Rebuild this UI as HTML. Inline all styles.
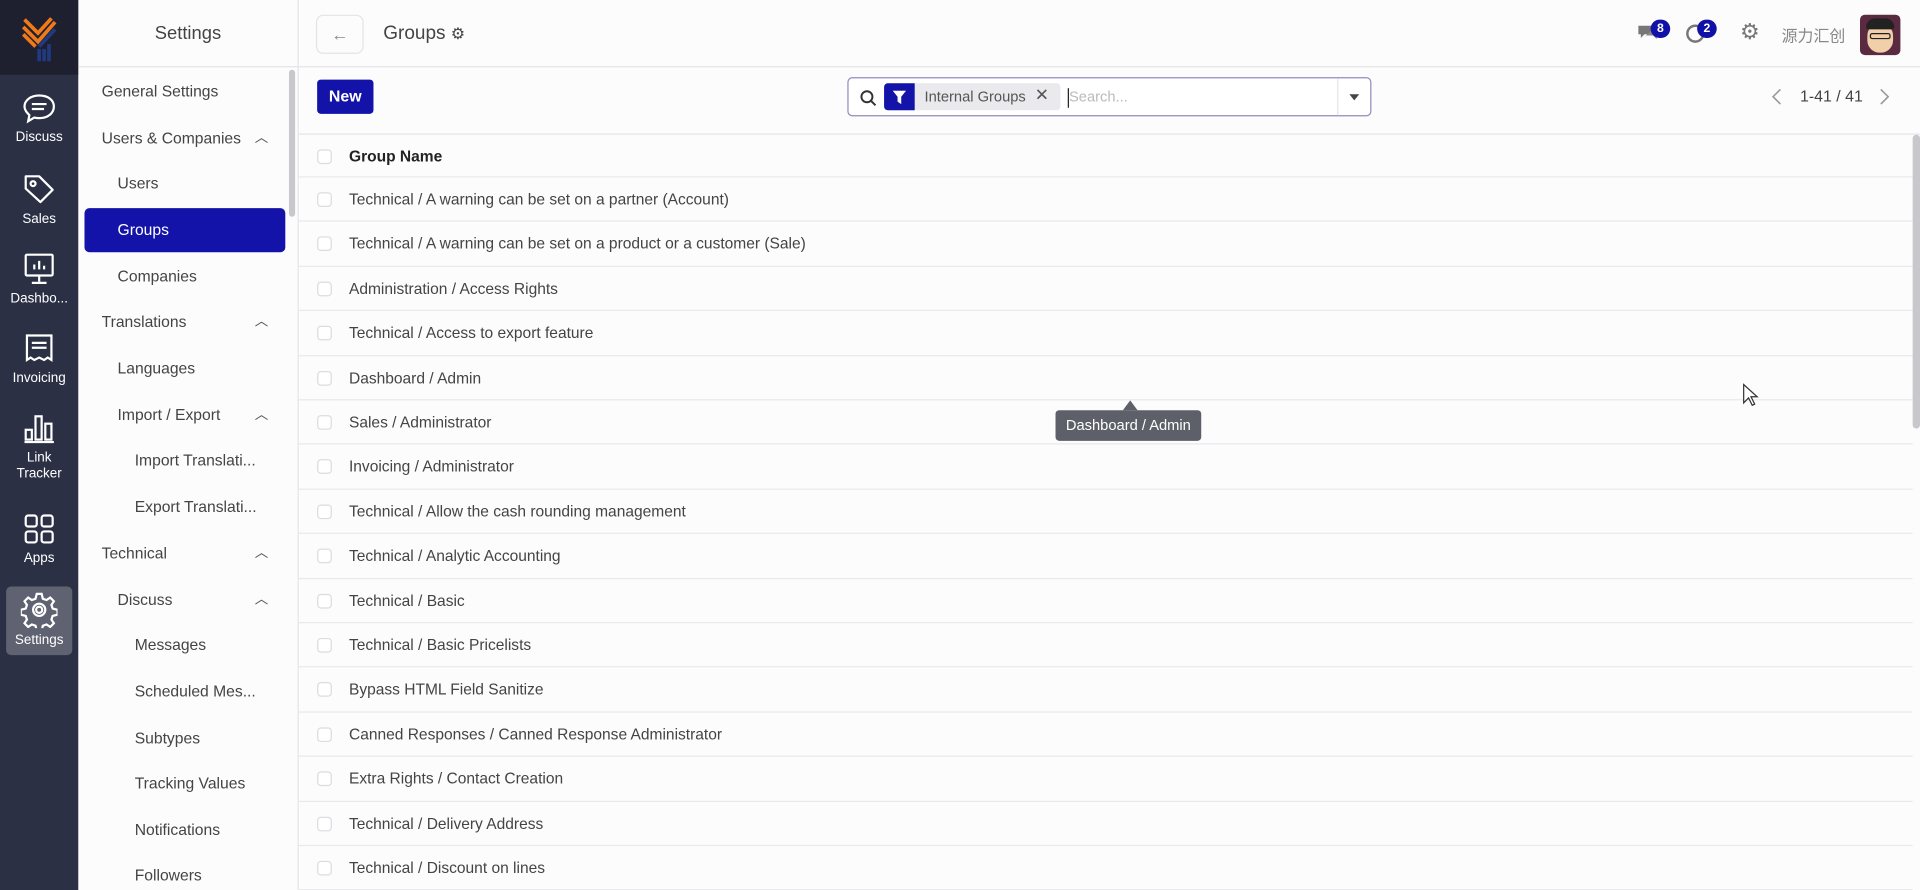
<!DOCTYPE html>
<html><head><meta charset="utf-8">
<style>
*{box-sizing:border-box;margin:0;padding:0}
html,body{width:1920px;height:890px;overflow:hidden;background:#fcfcfd}
#w{width:1568px;height:727px;transform:scale(1.22449);transform-origin:0 0;position:relative;font-family:"Liberation Sans","Noto Sans CJK SC",sans-serif;color:#444;font-size:13px}
.abs{position:absolute}
#nav{left:0;top:0;width:64px;height:727px;background:#2b3044}
#logo{left:0;top:0;width:64px;height:61px;background:#1e2030}
.ni{position:absolute;left:0;width:64px;text-align:center;color:#fff;font-size:11px;line-height:13px}
.ni svg{display:block;margin:0 auto 4px}
#side{left:64px;top:0;width:180px;height:727px;background:#fcfcfd;border-right:1px solid #e4e4e8}
.si{position:absolute;left:0;width:170px;font-size:12.8px;color:#444;height:20px;line-height:20px}
.car{position:absolute;right:14px;top:0;font-size:11px;color:#555}
#main{left:244px;top:0;width:1324px;height:727px}
.row{position:absolute;left:0;width:1318px;height:36.4px;border-bottom:1px solid #e9e9ed;line-height:36px;padding-left:41px;font-size:12.7px;color:#444}
.cb{position:absolute;left:15px;top:12px;width:12px;height:12px;border:1px solid #dcdce0;border-radius:3px;background:#fff}
</style></head><body><div id="w">
<div id="nav" class="abs"></div>
<div id="logo" class="abs">
<svg width="64" height="61" viewBox="0 0 64 61"><g stroke="#f07a1a" stroke-width="3" fill="none"><path d="M19 22l12 12 14-16"/><path d="M19 28l10 10"/><path d="M20 16l11 11 11-12"/></g><g stroke="#1f3a80" stroke-width="3"><path d="M32 38l13-14"/><path d="M32 40v10M36 40v10M40 36v14"/></g></svg></div>
<div class="ni" style="top:76px"><svg width="28" height="26" viewBox="0 0 28 26" fill="none" stroke="#fff" stroke-width="1.8"><path d="M14 2C7 2 2 6 2 11c0 3 2 5 4 7l-1 5 5-3c1 .3 2.5.5 4 .5 7 0 12-4 12-9.5S21 2 14 2z"/><path d="M8 9h12M8 13h10"/></svg>Discuss</div>
<div class="ni" style="top:141px"><svg width="28" height="28" viewBox="0 0 28 28" fill="none" stroke="#fff" stroke-width="1.8"><path d="M3 3h11l11 11-10 10L3 13z" stroke-linejoin="round"/><circle cx="9" cy="9" r="2"/></svg>Sales</div>
<div class="ni" style="top:206px"><svg width="28" height="28" viewBox="0 0 28 28" fill="none" stroke="#fff" stroke-width="1.8"><rect x="3" y="2" width="22" height="17" rx="1"/><path d="M14 19v5M8 25h12M10 14v-4M14 14V7M18 14v-3"/></svg>Dashbo...</div>
<div class="ni" style="top:271px"><svg width="28" height="28" viewBox="0 0 28 28" fill="none" stroke="#fff" stroke-width="1.8"><path d="M4 3h20v20l-3-2-3 2-4-2-4 2-3-2-3 2z"/><path d="M8 9h12M8 13h12"/></svg>Invoicing</div>
<div class="ni" style="top:336px"><svg width="28" height="28" viewBox="0 0 28 28" fill="none" stroke="#fff" stroke-width="1.8"><rect x="3" y="15" width="5" height="8"/><rect x="11" y="4" width="5" height="19"/><rect x="19" y="10" width="5" height="13"/><path d="M2 25h24"/></svg>Link<br>Tracker</div>
<div class="ni" style="top:418px"><svg width="28" height="28" viewBox="0 0 28 28" fill="none" stroke="#fff" stroke-width="1.8"><rect x="3" y="3" width="9" height="9" rx="2"/><rect x="16" y="3" width="9" height="9" rx="2"/><rect x="3" y="16" width="9" height="9" rx="2"/><rect x="16" y="16" width="9" height="9" rx="2"/></svg>Apps</div>
<div class="abs" style="left:5px;top:479px;width:54px;height:56px;background:#5f6270;border-radius:4px"></div>
<div class="ni" style="top:483px"><svg width="30" height="30" viewBox="0 0 30 30" fill="none" stroke="#fff" stroke-width="1.8"><path d="M13 2h4l1 4 3 1 3-2 3 3-2 3 1 3 4 1v4l-4 1-1 3 2 3-3 3-3-2-3 1-1 4h-4l-1-4-3-1-3 2-3-3 2-3-1-3-4-1v-4l4-1 1-3-2-3 3-3 3 2 3-1z"/><circle cx="15" cy="15" r="5"/><circle cx="15" cy="15" r="2.5"/></svg>Settings</div>

<div id="side" class="abs">
<div style="position:absolute;top:0;left:0;width:179px;height:55px;border-bottom:1px solid #e4e4e8;text-align:center;line-height:56px;font-size:15px;color:#444">Settings</div>
<div style="position:absolute;right:2px;top:57px;width:5px;height:120px;background:#c8c8cc;border-radius:3px"></div>
<div class="abs" style="left:5px;top:170px;width:164px;height:36px;background:#1313a9;border-radius:4px"></div>
<div class="si" style="top:65px;left:19px">General Settings</div>
<div class="si" style="top:103px;left:19px;width:150px">Users &amp; Companies<span class="car">︿</span></div>
<div class="si" style="top:140px;left:32px">Users</div>
<div class="si" style="top:178px;left:32px;color:#fff">Groups</div>
<div class="si" style="top:216px;left:32px">Companies</div>
<div class="si" style="top:253px;left:19px;width:150px">Translations<span class="car">︿</span></div>
<div class="si" style="top:291px;left:32px">Languages</div>
<div class="si" style="top:329px;left:32px;width:137px">Import / Export<span class="car">︿</span></div>
<div class="si" style="top:366px;left:46px">Import Translati...</div>
<div class="si" style="top:404px;left:46px">Export Translati...</div>
<div class="si" style="top:442px;left:19px;width:150px">Technical<span class="car">︿</span></div>
<div class="si" style="top:480px;left:32px;width:137px">Discuss<span class="car">︿</span></div>
<div class="si" style="top:517px;left:46px">Messages</div>
<div class="si" style="top:555px;left:46px">Scheduled Mes...</div>
<div class="si" style="top:593px;left:46px">Subtypes</div>
<div class="si" style="top:630px;left:46px">Tracking Values</div>
<div class="si" style="top:668px;left:46px">Notifications</div>
<div class="si" style="top:705px;left:46px">Followers</div>
</div>

<div id="main" class="abs">
<div class="abs" style="left:0;top:0;width:1324px;height:55px;border-bottom:1px solid #e4e4e8"></div>
<div class="abs" style="left:14px;top:12px;width:39px;height:32px;border:1px solid #e4e4e8;border-radius:6px;text-align:center;line-height:30px;color:#888;font-size:14px">←</div>
<div class="abs" style="left:69px;top:19px;font-size:15.5px;color:#444">Groups <span style="font-size:13px">⚙</span></div>
<div class="abs" style="left:1092px;top:17px"><svg width="20" height="18" viewBox="0 0 20 18"><path d="M2 4h11v7H7l-3 3v-3H2z" fill="#777"/><path d="M8 12h6l3 3v-3h1V6h-3" fill="#888"/></svg></div>
<div class="abs" style="left:1104px;top:16px;width:16px;height:15px;border-radius:8px;background:#1111a8;color:#fff;font-size:10px;font-weight:bold;text-align:center;line-height:15px">8</div>
<div class="abs" style="left:1133px;top:20px;width:15px;height:15px;border:2px solid #777;border-radius:50%"></div>
<div class="abs" style="left:1142px;top:16px;width:16px;height:15px;border-radius:8px;background:#1111a8;color:#fff;font-size:10px;font-weight:bold;text-align:center;line-height:15px">2</div>
<div class="abs" style="left:1177px;top:16px;font-size:18px;color:#777">⚙</div>
<div class="abs" style="left:1211px;top:19px;font-size:13px;color:#888">源力汇创</div>
<div class="abs" style="left:1275px;top:12px;width:33px;height:33px;border-radius:4px;background:#5a2a40;overflow:hidden"><div style="position:absolute;left:6px;top:7px;width:21px;height:24px;border-radius:10px;background:#f1cfa8"></div><div style="position:absolute;left:5px;top:3px;width:23px;height:9px;border-radius:8px 8px 2px 2px;background:#222"></div><div style="position:absolute;left:8px;top:15px;width:17px;height:5px;border:1.5px solid #222;border-radius:2px"></div></div>

<div class="abs" style="left:15px;top:65px;width:46px;height:28px;background:#1313a9;border-radius:3px;color:#fff;font-weight:bold;text-align:center;line-height:28px;font-size:13px">New</div>
<div class="abs" style="left:448px;top:63px;width:428px;height:32px;border:1px solid #8f8dbd;border-radius:4px;background:#fff">
<svg class="abs" style="left:9px;top:9px" width="14" height="14" viewBox="0 0 14 14" fill="none" stroke="#333" stroke-width="1.6"><circle cx="6" cy="6" r="4.5"/><path d="M9.5 9.5L13 13"/></svg>
<div class="abs" style="left:29px;top:4px;width:144px;height:22px;background:#e9e9ee;border-radius:3px"></div>
<div class="abs" style="left:29px;top:4px;width:25px;height:22px;background:#1313a9;border-radius:3px 0 0 3px"><svg style="margin:6px 0 0 7px" width="11" height="11" viewBox="0 0 11 11"><path d="M0 0h11L7 5v6L4 9V5z" fill="#fff"/></svg></div>
<div class="abs" style="left:62px;top:8px;font-size:12px;color:#555">Internal Groups</div>
<div class="abs" style="left:152px;top:5px;font-size:14px;color:#555">✕</div>
<div class="abs" style="left:179px;top:8px;width:1px;height:16px;background:#222"></div>
<div class="abs" style="left:180px;top:8px;font-size:12px;color:#bbb">Search...</div>
<div class="abs" style="left:399px;top:0;width:1px;height:30px;background:#e4e4e8"></div>
<div class="abs" style="left:409px;top:13px;width:0;height:0;border-left:4px solid transparent;border-right:4px solid transparent;border-top:5px solid #444"></div>
</div>
<svg class="abs" style="left:1203px;top:72px" width="8" height="14" viewBox="0 0 8 14"><path d="M7 1L1 7l6 6" fill="none" stroke="#999" stroke-width="1.3"/></svg>
<div class="abs" style="left:1226px;top:71px;font-size:13px;color:#444">1-41 / 41</div>
<svg class="abs" style="left:1291px;top:72px" width="8" height="14" viewBox="0 0 8 14"><path d="M1 1l6 6-6 6" fill="none" stroke="#999" stroke-width="1.3"/></svg>

<div class="abs" style="left:0;top:109px;width:1324px;border-top:1px solid #e4e4e8"></div>
<div class="row" style="top:110px;height:35px;font-weight:bold;color:#222"><span class="cb"></span>Group Name</div>
<div class="row" style="top:145px"><span class="cb"></span>Technical / A warning can be set on a partner (Account)</div>
<div class="row" style="top:181.4px"><span class="cb"></span>Technical / A warning can be set on a product or a customer (Sale)</div>
<div class="row" style="top:217.8px"><span class="cb"></span>Administration / Access Rights</div>
<div class="row" style="top:254.2px"><span class="cb"></span>Technical / Access to export feature</div>
<div class="row" style="top:290.6px"><span class="cb"></span>Dashboard / Admin</div>
<div class="row" style="top:327px"><span class="cb"></span>Sales / Administrator</div>
<div class="row" style="top:363.4px"><span class="cb"></span>Invoicing / Administrator</div>
<div class="row" style="top:399.8px"><span class="cb"></span>Technical / Allow the cash rounding management</div>
<div class="row" style="top:436.2px"><span class="cb"></span>Technical / Analytic Accounting</div>
<div class="row" style="top:472.6px"><span class="cb"></span>Technical / Basic</div>
<div class="row" style="top:509px"><span class="cb"></span>Technical / Basic Pricelists</div>
<div class="row" style="top:545.4px"><span class="cb"></span>Bypass HTML Field Sanitize</div>
<div class="row" style="top:581.8px"><span class="cb"></span>Canned Responses / Canned Response Administrator</div>
<div class="row" style="top:618.2px"><span class="cb"></span>Extra Rights / Contact Creation</div>
<div class="row" style="top:654.6px"><span class="cb"></span>Technical / Delivery Address</div>
<div class="row" style="top:691px"><span class="cb"></span>Technical / Discount on lines</div>
<div class="abs" style="left:1318px;top:110px;width:6px;height:240px;background:#c8c8cc;border-radius:3px"></div>

<div class="abs" style="left:673px;top:327px;width:0;height:0;border-left:6px solid transparent;border-right:6px solid transparent;border-bottom:8px solid #5d6068"></div>
<div class="abs" style="left:618px;top:335px;width:119px;height:25px;background:#5d6068;border-radius:3px;color:#fff;font-size:12px;text-align:center;line-height:25px">Dashboard / Admin</div>
<svg class="abs" style="left:1179px;top:313px" width="14" height="20" viewBox="0 0 14 20"><path d="M1 1v15l4-4 3 6 2-1-3-6h5z" fill="#fff" stroke="#333" stroke-width="1"/></svg>
</div>
</div></body></html>
